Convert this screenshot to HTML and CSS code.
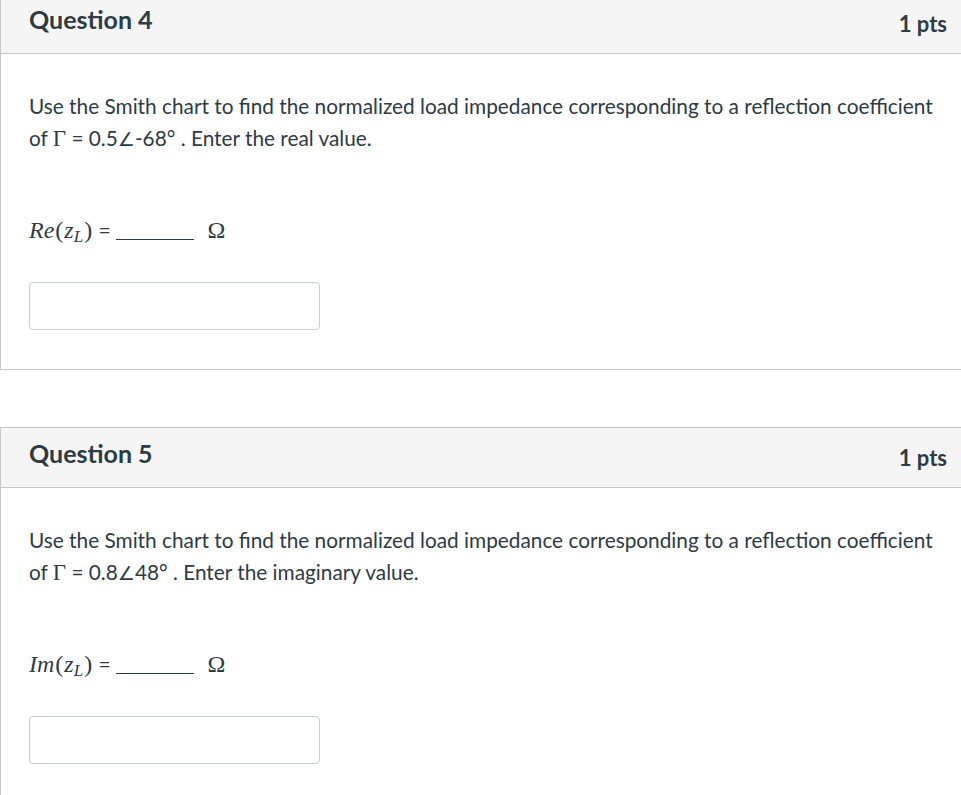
FILE: index.html
```html
<!DOCTYPE html>
<html>
<head>
<meta charset="utf-8">
<link rel="stylesheet" href="styles.css">
</head>
<body>
<div class="quiz">
  <div class="card first">
    <div class="card-header">
      <h2 class="title">Question 4</h2>
      <span class="pts">1 pts</span>
    </div>
    <div class="card-body">
      <p class="text">Use the Smith chart to find the normalized load impedance corresponding to a reflection coefficient of <span class="m">Γ</span> = 0.5<span class="ang">∠</span>-68° . Enter the real value.</p>
      <p class="formula"><span class="mi">Re</span><span class="mo">(</span><span class="mi">z</span><sub class="mi">L</sub><span class="mo">)</span> = <span class="blank"></span> <span class="omega">Ω</span></p>
      <input class="answer" type="text">
    </div>
  </div>
  <div class="card">
    <div class="card-header">
      <h2 class="title">Question 5</h2>
      <span class="pts">1 pts</span>
    </div>
    <div class="card-body">
      <p class="text">Use the Smith chart to find the normalized load impedance corresponding to a reflection coefficient of <span class="m">Γ</span> = 0.8<span class="ang">∠</span>48° . Enter the imaginary value.</p>
      <p class="formula"><span class="mi">Im</span><span class="mo">(</span><span class="mi">z</span><sub class="mi">L</sub><span class="mo">)</span> = <span class="blank"></span> <span class="omega">Ω</span></p>
      <input class="answer" type="text">
    </div>
  </div>
</div>
</body>
</html>
```
FILE: styles.css
```css
html, body {
  margin: 0;
  padding: 0;
  background: #ffffff;
  overflow: hidden;
}
body {
  font-family: Lato, "Noto Sans", sans-serif;
  color: #2d3b45;
}
.quiz {
  display: flex;
  flex-direction: column;
  gap: 57px;
  margin-top: -7px;
}
.card {
  border: 1px solid #c7c7c7;
  border-right: none;
  background: #fff;
}
.card-header {
  height: 59px;
  background: #f5f5f5;
  border-bottom: 1px solid #c7c7c7;
  display: flex;
  justify-content: space-between;
  align-items: flex-start;
  padding: 0 14px 0 28px;
}
.title {
  margin: 0;
  padding-top: 10px;
  font-size: 25px;
  font-weight: 700;
  line-height: 1.2;
}
.pts {
  padding-top: 17px;
  font-size: 22px;
  font-weight: 700;
  line-height: 1.2;
}
.card-body {
  padding: 36px 8px 39px 28px;
}
.text {
  margin: 0;
  font-size: 20.8px;
  line-height: 32px;
}
.m {
  font-family: "Liberation Serif", serif;
  font-size: 23px;
  line-height: 1;
}
.ang {
  font-family: "DejaVu Sans", sans-serif;
  font-size: 19px;
  line-height: 1;
}
.formula {
  margin: 60px 0 0 0;
  font-size: 21px;
  line-height: 32px;
  height: 32px;
}
.mi {
  font-family: "Liberation Serif", serif;
  font-style: italic;
  font-size: 24px;
  line-height: 0;
}
.mo {
  font-family: "Liberation Serif", serif;
  font-size: 24px;
  line-height: 0;
  margin: 0 1px;
}
sub.mi {
  font-size: 17px;
  line-height: 0;
  vertical-align: -4px;
}
.blank {
  display: inline-block;
  width: 78px;
  border-bottom: 1px solid #2d3b45;
  vertical-align: -2px;
}
.omega {
  font-family: "Liberation Serif", serif;
  font-size: 24px;
  line-height: 0;
  margin-left: 8px;
}
.answer {
  display: block;
  margin-top: 36px;
  width: 291px;
  height: 48px;
  box-sizing: border-box;
  border: 1px solid #c7cdd1;
  border-radius: 4px;
  background: #fff;
  padding: 0 8px;
  font-family: Lato, sans-serif;
  font-size: 16px;
}
```
